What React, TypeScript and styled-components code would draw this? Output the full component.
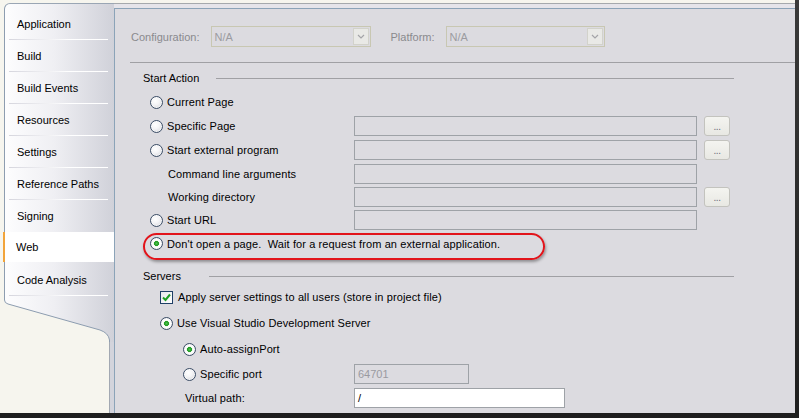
import React from 'react';
import styled, { createGlobalStyle } from 'styled-components';

const Global = createGlobalStyle`
  html, body { margin: 0; padding: 0; background: #2a2a2a; }
  body { font-family: "Liberation Sans", Arial, sans-serif; font-size: 11px; color: #000; }
  * { box-sizing: border-box; }
`;

const Frame = styled.div`
  width: 799px;
  height: 418px;
  background: linear-gradient(to bottom, #3a3a3a, #1e1e1e);
  overflow: hidden;
`;

const Window = styled.div`
  width: 795px;
  height: 413px;
  background: #f6f5ee;
  display: flex;
`;

/* ---------- left tab strip ---------- */
const TabColumn = styled.div`
  width: 114px;
  flex-shrink: 0;
  display: flex;
  flex-direction: column;
  padding-top: 3px;
`;

const TabList = styled.div`
  margin-left: 4px;
  width: 110px;
  border-left: 1px solid #8d9db0;
  border-top: 1px solid #9aa6b4;
  border-top-left-radius: 6px;
  background: linear-gradient(to right, #fdfdfe 0%, #efeff3 45%, #d0d1d9 100%);
  padding-top: 4px;
  display: flex;
  flex-direction: column;
`;

const Tab = styled.div<{ $selected?: boolean; $noSep?: boolean }>`
  position: relative;
  height: ${p => (p.$selected ? '30px' : '32px')};
  margin-bottom: ${p => (p.$selected ? '2px' : '0')};
  display: flex;
  align-items: center;
  padding-left: ${p => (p.$selected ? '11px' : '12px')};
  margin-left: ${p => (p.$selected ? '-2px' : '0')};
  background: ${p => (p.$selected ? '#ffffff' : 'transparent')};
  border-left: ${p => (p.$selected ? '2px solid #f2a43a' : 'none')};
  &::after {
    content: '';
    display: ${p => (p.$noSep ? 'none' : 'block')};
    position: absolute;
    left: 4px;
    right: 6px;
    bottom: 0;
    height: 1px;
    background: linear-gradient(to right, #d6d6de, #ffffff 60%, #ffffff);
  }
`;

const TailSvg = styled.svg`
  display: block;
  margin-left: 4px;
`;

const TabFiller = styled.div`
  flex: 1;
  margin-left: 4px;
  width: 110px;
  display: flex;
  justify-content: flex-end;
`;

const Strip = styled.div`
  width: 5px;
  border-left: 1px solid #a2a8b2;
  background: #d3d4dc;
`;

/* ---------- right content ---------- */
const Content = styled.div`
  flex: 1;
  display: flex;
  flex-direction: column;
  padding-top: 3px;
`;

const TopBand = styled.div`
  height: 5px;
  border-top: 1px solid #a5a9ad;
  background: #e5e4ea;
`;

const Panel = styled.div`
  flex: 1;
  background: #dcdbe0;
  border-top: 1px solid #8ba3b8;
  border-left: 1px solid #8ba3b8;
  display: flex;
  flex-direction: column;
`;

const ConfigRow = styled.div`
  margin-top: 17px;
  padding-left: 16px;
  height: 21px;
  display: flex;
  align-items: center;
`;

const DimLabel = styled.span<{ $mr: number }>`
  color: #8a8a8e;
  margin-right: ${p => p.$mr}px;
`;

const Combo = styled.div<{ $w: number; $mr?: number }>`
  width: ${p => p.$w}px;
  height: 21px;
  margin-right: ${p => p.$mr ?? 0}px;
  border: 1px solid #c8c7b2;
  display: flex;
  align-items: center;
  justify-content: space-between;
  padding: 1px 1px 1px 3px;
  color: #9b9ba0;
`;

const ComboArrow = styled.div`
  width: 16px;
  height: 17px;
  background: #e9e9e6;
  border: 1px solid #d2d2cb;
  display: flex;
  align-items: center;
  justify-content: center;
`;

const Divider = styled.div`
  margin-top: 15px;
  margin-left: 15px;
  height: 1px;
  background: #a0a0a4;
`;

const SectionHeader = styled.div<{ $mt: number; $gap: number }>`
  margin-top: ${p => p.$mt}px;
  height: 16px;
  padding-left: 28px;
  padding-right: 61px;
  display: flex;
  align-items: center;
  gap: ${p => p.$gap}px;
  &::after {
    content: '';
    flex: 1;
    height: 1px;
    background: #a0a0a4;
  }
`;

const StartGrid = styled.div`
  margin-top: 4px;
  padding-left: 35px;
  display: grid;
  grid-template-columns: 204px 343px 26px;
  grid-template-rows: 24px 24px 24px 23px 23px 24px 23px;
  align-items: center;
  & > :nth-child(3n) {
    margin-left: 7px;
  }
`;

const ServersGrid = styled.div`
  padding-left: 45px;
  display: grid;
  grid-template-columns: 194px auto;
  grid-template-rows: 26px 26px 26px 24px 24px;
  align-items: center;
  justify-items: start;
`;

const Option = styled.label<{ $indent?: number; $span?: boolean; $gap?: number }>`
  position: relative;
  display: flex;
  align-items: center;
  gap: ${p => p.$gap ?? 4}px;
  padding-left: ${p => p.$indent ?? 0}px;
  grid-column: ${p => (p.$span ? '1 / -1' : 'auto')};
  white-space: nowrap;
  letter-spacing: 0.1px;
`;

const PlainLabel = styled.span<{ $indent: number }>`
  padding-left: ${p => p.$indent}px;
  white-space: nowrap;
  letter-spacing: 0.1px;
`;

const RadioCircle = styled.span<{ $checked?: boolean }>`
  width: 13px;
  height: 13px;
  border-radius: 50%;
  border: 1px solid #3b4d66;
  flex-shrink: 0;
  background: ${p =>
    p.$checked
      ? 'radial-gradient(circle at 50% 50%, #4fc24f 0, #1f9a22 2.2px, #e8f3e8 2.8px, #ffffff 3.6px, #ffffff 4px, #d9d9de 6px)'
      : 'radial-gradient(circle at 40% 35%, #ffffff 0, #f4f4f6 40%, #cfd0d6 100%)'};
  box-shadow: inset 0 0 0 1px rgba(255, 255, 255, 0.6);
`;

const CheckSquare = styled.span`
  width: 13px;
  height: 13px;
  border: 1px solid #1f3f66;
  background: linear-gradient(135deg, #e6e7ea, #ffffff);
  flex-shrink: 0;
  display: flex;
  align-items: center;
  justify-content: center;
`;

const TextBox = styled.div<{ $w?: number; $white?: boolean; $dim?: boolean }>`
  width: ${p => (p.$w ? `${p.$w}px` : '100%')};
  height: 20px;
  border: 1px solid #9ea2a7;
  background: ${p => (p.$white ? '#ffffff' : '#dcdbe0')};
  color: ${p => (p.$dim ? '#9a9aa0' : '#000')};
  display: flex;
  align-items: center;
  padding-left: 3px;
`;

const Browse = styled.div`
  width: 26px;
  height: 20px;
  border: 1px solid #c3c3be;
  border-radius: 3px;
  background: linear-gradient(to bottom, #f4f4f0, #e8e8e3);
  color: #6c6c78;
  font-size: 10px;
  display: flex;
  align-items: flex-end;
  justify-content: center;
  padding-bottom: 4px;
  line-height: 8px;
  letter-spacing: -0.5px;
`;

const Blank = styled.span``;

const Highlight = styled.span`
  position: absolute;
  left: -7px;
  top: -4px;
  width: 402px;
  height: 27px;
  border: 2px solid #e2141b;
  border-radius: 14px;
  box-shadow: 1px 2px 3px rgba(0, 0, 0, 0.35);
  pointer-events: none;
`;

const Radio: React.FC<{ checked?: boolean }> = ({ checked }) => <RadioCircle $checked={checked} />;

const Check: React.FC = () => (
  <CheckSquare>
    <svg width="9" height="9" viewBox="0 0 9 9">
      <path d="M1 4.5 L3.5 7 L8 1.5" fill="none" stroke="#1e9e23" strokeWidth="2" />
    </svg>
  </CheckSquare>
);

const Chevron = () => (
  <svg width="8" height="5" viewBox="0 0 8 5">
    <path d="M1 1 L4 4 L7 1" fill="none" stroke="#a4a4a8" strokeWidth="1.2" />
  </svg>
);

const tabs = [
  'Application',
  'Build',
  'Build Events',
  'Resources',
  'Settings',
  'Reference Paths',
  'Signing',
  'Web',
  'Code Analysis',
];
const selectedTab = 'Web';

export default function App() {
  const selIdx = tabs.indexOf(selectedTab);
  return (
    <>
      <Global />
      <Frame>
        <Window>
          <TabColumn>
            <TabList>
              {tabs.map((t, i) => (
                <Tab key={t} $selected={i === selIdx} $noSep={i === selIdx || i === selIdx - 1}>
                  {t}
                </Tab>
              ))}
            </TabList>
            <TailSvg width="110" height="46" viewBox="0 0 110 46">
              <defs>
                <linearGradient id="tabg" x1="0" y1="0" x2="110" y2="0" gradientUnits="userSpaceOnUse">
                  <stop offset="0" stopColor="#fdfdfe" />
                  <stop offset="0.45" stopColor="#efeff3" />
                  <stop offset="1" stopColor="#d0d1d9" />
                </linearGradient>
              </defs>
              <path d="M0,0 H110 V46 H105.5 V44 Q104.5,37 96,34 L4,8 Q0.5,7 0.5,4 Z" fill="url(#tabg)" />
              <path
                d="M0.5,0 V4 Q0.5,7 4,8 L96,34 Q104.5,37 105.5,44 V46"
                fill="none"
                stroke="#8d9db0"
                strokeWidth="1"
              />
            </TailSvg>
            <TabFiller>
              <Strip />
            </TabFiller>
          </TabColumn>

          <Content>
            <TopBand />
            <Panel>
              <ConfigRow>
                <DimLabel $mr={11}>Configuration:</DimLabel>
                <Combo $w={160} $mr={20}>
                  N/A
                  <ComboArrow>
                    <Chevron />
                  </ComboArrow>
                </Combo>
                <DimLabel $mr={11}>Platform:</DimLabel>
                <Combo $w={159}>
                  N/A
                  <ComboArrow>
                    <Chevron />
                  </ComboArrow>
                </Combo>
              </ConfigRow>
              <Divider />

              <SectionHeader $mt={7} $gap={17}>Start Action</SectionHeader>
              <StartGrid>
                <Option>
                  <Radio /> Current Page
                </Option>
                <Blank />
                <Blank />

                <Option>
                  <Radio /> Specific Page
                </Option>
                <TextBox />
                <Browse>...</Browse>

                <Option>
                  <Radio /> Start external program
                </Option>
                <TextBox />
                <Browse>...</Browse>

                <PlainLabel $indent={18}>Command line arguments</PlainLabel>
                <TextBox />
                <Blank />

                <PlainLabel $indent={18}>Working directory</PlainLabel>
                <TextBox />
                <Browse>...</Browse>

                <Option>
                  <Radio /> Start URL
                </Option>
                <TextBox />
                <Blank />

                <Option>
                  <Radio checked /> Don't open a page.&nbsp;&nbsp;Wait for a request from an external application.
                  <Highlight />
                </Option>
              </StartGrid>

              <SectionHeader $mt={13} $gap={28}>Servers</SectionHeader>
              <ServersGrid>
                <Option $span $gap={5}>
                  <Check /> Apply server settings to all users (store in project file)
                </Option>
                <Option $span>
                  <Radio checked /> Use Visual Studio Development Server
                </Option>
                <Option $span $indent={23}>
                  <Radio checked /> Auto-assignPort
                </Option>
                <Option $indent={23}>
                  <Radio /> Specific port
                </Option>
                <TextBox $w={115} $dim>
                  64701
                </TextBox>
                <PlainLabel $indent={25}>Virtual path:</PlainLabel>
                <TextBox $w={211} $white>
                  /
                </TextBox>
              </ServersGrid>
            </Panel>
          </Content>
        </Window>
      </Frame>
    </>
  );
}
